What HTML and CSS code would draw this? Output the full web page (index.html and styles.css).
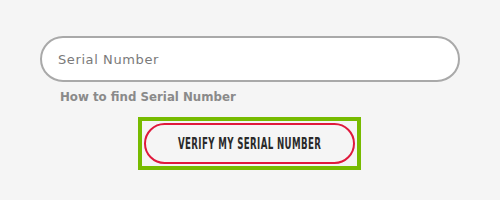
FILE: index.html
```html
<!DOCTYPE html>
<html>
<head>
<meta charset="utf-8">
<link rel="stylesheet" href="styles.css">
</head>
<body>
<div class="page">
  <div class="field">
    <input class="serial" type="text" placeholder="Serial Number">
  </div>
  <a class="help" href="#">How to find Serial Number</a>
  <div class="actions">
    <div class="focus-ring">
      <button class="verify" type="button"><span class="verify-label">VERIFY MY SERIAL NUMBER</span></button>
    </div>
  </div>
</div>
</body>
</html>
```
FILE: styles.css
```css
html, body {
  margin: 0;
  padding: 0;
  background: #f5f5f5;
  width: 500px;
  height: 200px;
  overflow: hidden;
}
.page {
  padding: 36px 40px 0 40px;
  display: flex;
  flex-direction: column;
}
.field {
  display: flex;
}
.serial {
  box-sizing: border-box;
  width: 420px;
  height: 46px;
  border: 2px solid #a9a9a9;
  border-radius: 23px;
  background: #fff;
  padding: 0 0 0 16px;
  font-family: "DejaVu Sans", sans-serif;
  font-size: 13px;
  letter-spacing: 0.6px;
  color: #555;
  outline: none;
}
.serial::placeholder {
  color: #7a7a7a;
}
.help {
  margin: 7px 0 0 20px;
  font-family: "DejaVu Sans", sans-serif;
  font-weight: bold;
  font-size: 11.8px;
  color: #8a8a8a;
  text-decoration: none;
  line-height: 16px;
}
.actions {
  display: flex;
  justify-content: center;
  margin-top: 12px;
}
.focus-ring {
  border: 4px solid #77bb00;
  padding: 2px;
  display: flex;
  margin-left: -1px;
}
.verify {
  box-sizing: border-box;
  width: 211px;
  height: 41px;
  border: 2px solid #e0193c;
  border-radius: 21px;
  background: #f5f5f5;
  padding: 0;
  display: flex;
  align-items: center;
  justify-content: center;
  cursor: pointer;
}
.verify-label {
  font-family: "DejaVu Sans Condensed", "DejaVu Sans", sans-serif;
  font-stretch: condensed;
  font-weight: bold;
  font-size: 15.5px;
  color: #2a2a2a;
  letter-spacing: 0.6px;
  display: inline-block;
  transform: scaleX(0.62);
  white-space: nowrap;
}
```
